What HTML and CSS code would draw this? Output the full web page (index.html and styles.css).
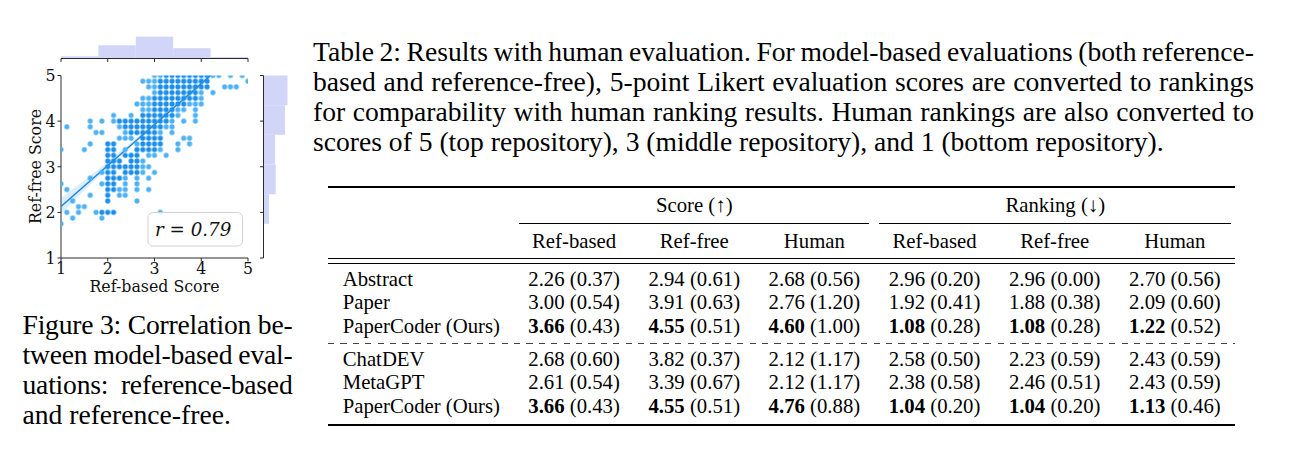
FILE: index.html
```html
<!DOCTYPE html>
<html lang="en">
<head>
<meta charset="utf-8">
<title>Results with human evaluation</title>
<link rel="stylesheet" href="styles.css">
</head>
<body>
<main class="page">
  <figure class="fig">
    <svg class="plot" width="300" height="300" viewBox="0 0 300 300">
      <defs>
        <pattern id="pd" patternUnits="userSpaceOnUse" width="1" height="1"><circle cx=".5" cy=".5" r=".44" class="dotd"/></pattern>
        <pattern id="pl" patternUnits="userSpaceOnUse" width="1" height="1"><circle cx=".5" cy=".5" r=".44" class="dotl"/></pattern>
        <clipPath id="ax"><rect x="61" y="75.5" width="187" height="182.5"/></clipPath>
      </defs>
      <g class="hist">
        <rect x="61" y="56.3" width="37.4" height="2.2"/>
        <rect x="98.4" y="45.3" width="37.4" height="13.2"/>
        <rect x="135.8" y="36.7" width="37.4" height="21.8"/>
        <rect x="173.2" y="48.2" width="37.4" height="10.3"/>
        <rect x="210.6" y="57" width="37.4" height="1.5"/>
        <rect x="263.5" y="75.5" width="24" height="29.7"/>
        <rect x="263.5" y="105.2" width="21.5" height="29.6"/>
        <rect x="263.5" y="134.8" width="11.5" height="29.7"/>
        <rect x="263.5" y="164.5" width="12.2" height="29.7"/>
        <rect x="263.5" y="194.2" width="5.5" height="29.6"/>
      </g>
      <g class="spine">
        <line x1="61" y1="58.5" x2="248" y2="58.5"/>
        <line x1="61" y1="58.5" x2="61" y2="62"/>
        <line x1="107.75" y1="58.5" x2="107.75" y2="62"/>
        <line x1="154.5" y1="58.5" x2="154.5" y2="62"/>
        <line x1="201.25" y1="58.5" x2="201.25" y2="62"/>
        <line x1="248" y1="58.5" x2="248" y2="62"/>
        <line x1="263.5" y1="75.5" x2="263.5" y2="258"/>
        <line x1="260" y1="75.5" x2="263.5" y2="75.5"/>
        <line x1="260" y1="121.1" x2="263.5" y2="121.1"/>
        <line x1="260" y1="166.75" x2="263.5" y2="166.75"/>
        <line x1="260" y1="212.4" x2="263.5" y2="212.4"/>
        <line x1="260" y1="258" x2="263.5" y2="258"/>
        <line x1="61" y1="75.5" x2="61" y2="258"/>
        <line x1="61" y1="258" x2="248" y2="258"/>
        <line x1="57.5" y1="75.5" x2="61" y2="75.5"/>
        <line x1="57.5" y1="121.1" x2="61" y2="121.1"/>
        <line x1="57.5" y1="166.75" x2="61" y2="166.75"/>
        <line x1="57.5" y1="212.4" x2="61" y2="212.4"/>
        <line x1="57.5" y1="258" x2="61" y2="258"/>
        <line x1="61" y1="258" x2="61" y2="261.5"/>
        <line x1="107.75" y1="258" x2="107.75" y2="261.5"/>
        <line x1="154.5" y1="258" x2="154.5" y2="261.5"/>
        <line x1="201.25" y1="258" x2="201.25" y2="261.5"/>
        <line x1="248" y1="258" x2="248" y2="261.5"/>
      </g>
      <g clip-path="url(#ax)">
        <polygon class="ci" points="61,198 84.4,180.5 107.75,161.9 131.1,142.6 154.5,122.4 177.9,101.4 201.25,79.8 210.6,71.1 210.6,78.1 201.25,85.8 177.9,105.4 154.5,125.4 131.1,146.2 107.75,167.9 84.4,190.5 61,214"/>
        <line class="reg" x1="61" y1="206.5" x2="210.6" y2="75.5"/>
        <g transform="translate(58.078 260.852) scale(5.84375 -5.703125)">
          <rect class="dk" x="18" y="32" width="8" height="1"/>
          <rect class="dk" x="17" y="31" width="9" height="1"/>
          <rect class="dk" x="17" y="30" width="9" height="1"/>
          <rect class="dk" x="17" y="29" width="7" height="1"/>
          <rect class="dk" x="16" y="28" width="8" height="1"/>
          <rect class="dk" x="16" y="27" width="6" height="1"/>
          <rect class="dk" x="16" y="26" width="4" height="1"/>
          <rect class="dk" x="14" y="25" width="6" height="1"/>
          <rect class="dk" x="10" y="24" width="9" height="1"/>
          <rect class="dk" x="11" y="23" width="7" height="1"/>
          <rect class="dk" x="12" y="22" width="5" height="1"/>
          <rect class="dk" x="14" y="21" width="4" height="1"/>
          <rect class="dk" x="8" y="20" width="2" height="1"/>
          <rect class="dk" x="14" y="20" width="4" height="1"/>
          <rect class="dk" x="8" y="19" width="2" height="1"/>
          <rect class="dk" x="13" y="19" width="4" height="1"/>
          <rect class="dk" x="8" y="18" width="2" height="1"/>
          <rect class="dk" x="11" y="18" width="3" height="1"/>
          <rect class="dk" x="8" y="17" width="3" height="1"/>
          <rect class="dk" x="12" y="17" width="2" height="1"/>
          <rect class="dk" x="8" y="16" width="6" height="1"/>
          <rect class="dk" x="8" y="15" width="2" height="1"/>
          <rect class="dk" x="11" y="15" width="3" height="1"/>
          <rect class="dk" x="8" y="14" width="3" height="1"/>
          <rect class="dk" x="8" y="13" width="2" height="1"/>
          <rect class="dk" x="8" y="12" width="2" height="1"/>
          <rect class="dk" x="8" y="11" width="1" height="1"/>
          <rect class="dk" x="8" y="10" width="1" height="1"/>
          <rect class="dk" x="7" y="8" width="3" height="1"/>
          <rect class="lt" x="16" y="32" width="2" height="1"/>
          <rect class="lt" x="26" y="32" width="2" height="1"/>
          <rect class="lt" x="29" y="32" width="1" height="1"/>
          <rect class="lt" x="31" y="32" width="1" height="1"/>
          <rect class="lt" x="14" y="31" width="3" height="1"/>
          <rect class="lt" x="32" y="31" width="1" height="1"/>
          <rect class="lt" x="15" y="30" width="2" height="1"/>
          <rect class="lt" x="28" y="30" width="3" height="1"/>
          <rect class="lt" x="16" y="29" width="1" height="1"/>
          <rect class="lt" x="24" y="29" width="1" height="1"/>
          <rect class="lt" x="26" y="29" width="1" height="1"/>
          <rect class="lt" x="14" y="28" width="2" height="1"/>
          <rect class="lt" x="24" y="28" width="1" height="1"/>
          <rect class="lt" x="13" y="27" width="3" height="1"/>
          <rect class="lt" x="22" y="27" width="3" height="1"/>
          <rect class="lt" x="14" y="26" width="2" height="1"/>
          <rect class="lt" x="20" y="26" width="2" height="1"/>
          <rect class="lt" x="23" y="26" width="1" height="1"/>
          <rect class="lt" x="9" y="25" width="1" height="1"/>
          <rect class="lt" x="12" y="25" width="1" height="1"/>
          <rect class="lt" x="20" y="25" width="1" height="1"/>
          <rect class="lt" x="23" y="25" width="1" height="1"/>
          <rect class="lt" x="5" y="24" width="1" height="1"/>
          <rect class="lt" x="7" y="24" width="1" height="1"/>
          <rect class="lt" x="9" y="24" width="1" height="1"/>
          <rect class="lt" x="19" y="24" width="1" height="1"/>
          <rect class="lt" x="21" y="24" width="1" height="1"/>
          <rect class="lt" x="23" y="24" width="1" height="1"/>
          <rect class="lt" x="1" y="23" width="1" height="1"/>
          <rect class="lt" x="5" y="23" width="1" height="1"/>
          <rect class="lt" x="10" y="23" width="1" height="1"/>
          <rect class="lt" x="18" y="23" width="2" height="1"/>
          <rect class="lt" x="6" y="22" width="2" height="1"/>
          <rect class="lt" x="11" y="22" width="1" height="1"/>
          <rect class="lt" x="17" y="22" width="1" height="1"/>
          <rect class="lt" x="19" y="22" width="1" height="1"/>
          <rect class="lt" x="10" y="21" width="3" height="1"/>
          <rect class="lt" x="21" y="21" width="2" height="1"/>
          <rect class="lt" x="5" y="20" width="1" height="1"/>
          <rect class="lt" x="13" y="20" width="1" height="1"/>
          <rect class="lt" x="20" y="20" width="1" height="1"/>
          <rect class="lt" x="22" y="20" width="1" height="1"/>
          <rect class="lt" x="0" y="19" width="1" height="1"/>
          <rect class="lt" x="4" y="19" width="1" height="1"/>
          <rect class="lt" x="11" y="19" width="1" height="1"/>
          <rect class="lt" x="17" y="19" width="1" height="1"/>
          <rect class="lt" x="20" y="19" width="1" height="1"/>
          <rect class="lt" x="15" y="18" width="2" height="1"/>
          <rect class="lt" x="18" y="18" width="1" height="1"/>
          <rect class="lt" x="14" y="17" width="1" height="1"/>
          <rect class="lt" x="14" y="16" width="2" height="1"/>
          <rect class="lt" x="7" y="15" width="1" height="1"/>
          <rect class="lt" x="14" y="15" width="1" height="1"/>
          <rect class="lt" x="16" y="15" width="1" height="1"/>
          <rect class="lt" x="5" y="14" width="1" height="1"/>
          <rect class="lt" x="11" y="14" width="1" height="1"/>
          <rect class="lt" x="13" y="14" width="1" height="1"/>
          <rect class="lt" x="15" y="14" width="1" height="1"/>
          <rect class="lt" x="0" y="13" width="1" height="1"/>
          <rect class="lt" x="7" y="13" width="1" height="1"/>
          <rect class="lt" x="11" y="13" width="1" height="1"/>
          <rect class="lt" x="13" y="13" width="1" height="1"/>
          <rect class="lt" x="1" y="12" width="1" height="1"/>
          <rect class="lt" x="10" y="12" width="2" height="1"/>
          <rect class="lt" x="13" y="12" width="1" height="1"/>
          <rect class="lt" x="15" y="12" width="1" height="1"/>
          <rect class="lt" x="5" y="11" width="1" height="1"/>
          <rect class="lt" x="10" y="11" width="2" height="1"/>
          <rect class="lt" x="2" y="10" width="1" height="1"/>
          <rect class="lt" x="13" y="10" width="1" height="1"/>
          <rect class="lt" x="3" y="9" width="2" height="1"/>
          <rect class="lt" x="1" y="8" width="1" height="1"/>
          <rect class="lt" x="3" y="8" width="1" height="1"/>
          <rect class="lt" x="6" y="8" width="1" height="1"/>
          <rect class="lt" x="17" y="8" width="1" height="1"/>
          <rect class="lt" x="2" y="7" width="1" height="1"/>
          <rect class="lt" x="7" y="7" width="1" height="1"/>
          <rect class="lt" x="0" y="6" width="1" height="1"/>
        </g>
      </g>
      <rect class="legend" x="148" y="212.5" width="94.5" height="33.5" rx="5"/>
      <text class="rtxt" x="155" y="235.5">r = 0.79</text>
      <g class="tick">
        <text x="55.5" y="81.3" text-anchor="end">5</text>
        <text x="55.5" y="126.9" text-anchor="end">4</text>
        <text x="55.5" y="172.5" text-anchor="end">3</text>
        <text x="55.5" y="218.2" text-anchor="end">2</text>
        <text x="55.5" y="263.8" text-anchor="end">1</text>
        <text x="61" y="274" text-anchor="middle">1</text>
        <text x="107.75" y="274" text-anchor="middle">2</text>
        <text x="154.5" y="274" text-anchor="middle">3</text>
        <text x="201.25" y="274" text-anchor="middle">4</text>
        <text x="248" y="274" text-anchor="middle">5</text>
      </g>
      <text class="alab" x="154.5" y="292.3" text-anchor="middle">Ref-based Score</text>
      <text class="alab" transform="translate(41 166.5) rotate(-90)" text-anchor="middle">Ref-free Score</text>
    </svg>
    <figcaption class="figcap">
      <span class="ln">Figure 3: Correlation be-</span>
      <span class="ln">tween model-based eval-</span>
      <span class="ln">uations: reference-based</span>
      <span class="ln end">and reference-free.</span>
    </figcaption>
  </figure>

  <section class="tab">
    <p class="tabcap">
      <span class="ln">Table 2: Results with human evaluation. For model-based evaluations (both reference-</span>
      <span class="ln">based and reference-free), 5-point Likert evaluation scores are converted to rankings</span>
      <span class="ln">for comparability with human ranking results. Human rankings are also converted to</span>
      <span class="ln end">scores of 5 (top repository), 3 (middle repository), and 1 (bottom repository).</span>
    </p>
    <table class="res">
      <colgroup>
        <col class="c0"><col class="cn"><col class="cn"><col class="cn"><col class="cn"><col class="cn"><col class="cn">
      </colgroup>
      <thead>
        <tr class="grp">
          <th></th>
          <th colspan="3"><div class="cmid">Score (↑)</div></th>
          <th colspan="3"><div class="cmid cmid-r">Ranking (↓)</div></th>
        </tr>
        <tr class="sub">
          <th></th><th>Ref-based</th><th>Ref-free</th><th>Human</th><th>Ref-based</th><th>Ref-free</th><th>Human</th>
        </tr>
        <tr class="sp"><td colspan="7"></td></tr>
      </thead>
      <tbody>
        <tr class="first">
          <td>Abstract</td><td>2.26 (0.37)</td><td>2.94 (0.61)</td><td>2.68 (0.56)</td><td>2.96 (0.20)</td><td>2.96 (0.00)</td><td>2.70 (0.56)</td>
        </tr>
        <tr>
          <td>Paper</td><td>3.00 (0.54)</td><td>3.91 (0.63)</td><td>2.76 (1.20)</td><td>1.92 (0.41)</td><td>1.88 (0.38)</td><td>2.09 (0.60)</td>
        </tr>
        <tr class="end">
          <td>PaperCoder (Ours)</td><td><b>3.66</b> (0.43)</td><td><b>4.55</b> (0.51)</td><td><b>4.60</b> (1.00)</td><td><b>1.08</b> (0.28)</td><td><b>1.08</b> (0.28)</td><td><b>1.22</b> (0.52)</td>
        </tr>
        <tr class="dash"><td colspan="7"></td></tr>
        <tr class="after">
          <td>ChatDEV</td><td>2.68 (0.60)</td><td>3.82 (0.37)</td><td>2.12 (1.17)</td><td>2.58 (0.50)</td><td>2.23 (0.59)</td><td>2.43 (0.59)</td>
        </tr>
        <tr>
          <td>MetaGPT</td><td>2.61 (0.54)</td><td>3.39 (0.67)</td><td>2.12 (1.17)</td><td>2.38 (0.58)</td><td>2.46 (0.51)</td><td>2.43 (0.59)</td>
        </tr>
        <tr class="final">
          <td>PaperCoder (Ours)</td><td><b>3.66</b> (0.43)</td><td><b>4.55</b> (0.51)</td><td><b>4.76</b> (0.88)</td><td><b>1.04</b> (0.20)</td><td><b>1.04</b> (0.20)</td><td><b>1.13</b> (0.46)</td>
        </tr>
      </tbody>
    </table>
  </section>
</main>
</body>
</html>
```

FILE: styles.css
```css
html, body {
  margin: 0;
  padding: 0;
  background: #fff;
}

body {
  font-family: "Liberation Serif", "Times New Roman", serif;
  color: #000;
}

.page {
  display: flex;
  align-items: flex-start;
  width: 1301px;
  height: 454px;
  overflow: hidden;
}

.fig {
  margin: 0;
  width: 300px;
  flex: none;
}

.plot {
  display: block;
}

.hist rect {
  fill: #d1d5f8;
}

.spine line {
  stroke: #2b2b2b;
  stroke-width: 1;
  fill: none;
}

.ci {
  fill: #1e88e5;
  fill-opacity: 0.16;
}

.dotd {
  fill: #1a8ee8;
}

.dotl {
  fill: #4db1f4;
}

.dk {
  fill: url(#pd);
}

.lt {
  fill: url(#pl);
}

.reg {
  stroke: #1a86dc;
  stroke-width: 1.4;
}

.legend {
  fill: #fff;
  fill-opacity: 0.85;
  stroke: #d2d2d2;
  stroke-width: 1;
}

.rtxt {
  font-family: "DejaVu Serif", serif;
  font-style: italic;
  font-size: 18.3px;
  fill: #111;
}

.tick text,
.alab {
  font-family: "DejaVu Serif", serif;
  font-size: 15.8px;
  fill: #111;
}

.figcap {
  margin: 10px 0 0 22.5px;
  width: 270px;
  font-size: 27.6px;
  line-height: 30px;
}

.ln {
  display: block;
  text-align: justify;
  text-align-last: justify;
}

.figcap .ln {
  letter-spacing: -0.2px;
  word-spacing: -1px;
}

.ln.end {
  text-align-last: left;
}

.figcap .ln.end {
  letter-spacing: 0;
  word-spacing: 0;
}

.tab {
  margin-left: 13px;
  width: 941px;
  flex: none;
}

.tabcap {
  margin: 37.3px 0 0;
  font-size: 27.6px;
  line-height: 30px;
}

.tabcap .ln {
  word-spacing: -2.5px;
}

.tabcap .ln.end {
  word-spacing: 0;
}

.res {
  margin: 29px 0 0 15px;
  width: 907px;
  table-layout: fixed;
  border-collapse: separate;
  border-spacing: 0;
  font-size: 20.75px;
}

.c0 {
  width: 186px;
}

.cn {
  width: 120.17px;
}

.res th {
  font-weight: normal;
  padding: 0;
  text-align: center;
}

.grp th {
  border-top: 2px solid #000;
  vertical-align: bottom;
}

.cmid {
  line-height: 34.5px;
  border-bottom: 1px solid #000;
  margin: 0 5px;
}

.cmid-r {
  margin: 0 4px 0 5px;
}

.sub th {
  line-height: 34.4px;
  border-bottom: 1px solid #000;
}

.sp td {
  height: 3.6px;
  padding: 0;
  border-bottom: 1px solid #000;
}

.res td {
  padding: 0;
  line-height: 23.35px;
  text-align: center;
  white-space: nowrap;
}

.res td:first-child {
  text-align: left;
  padding-left: 14.7px;
}

.res .sp td,
.res .dash td {
  padding: 0;
}

.first td {
  padding-top: 4.2px;
}

.end td {
  padding-bottom: 5.1px;
}

.dash td {
  height: 1px;
  line-height: 1px;
  background: repeating-linear-gradient(90deg, #444 0 6.2px, transparent 6.2px 12.4px);
}

.after td {
  padding-top: 3.8px;
}

.final td {
  padding-bottom: 6.2px;
  border-bottom: 2px solid #000;
}
```
